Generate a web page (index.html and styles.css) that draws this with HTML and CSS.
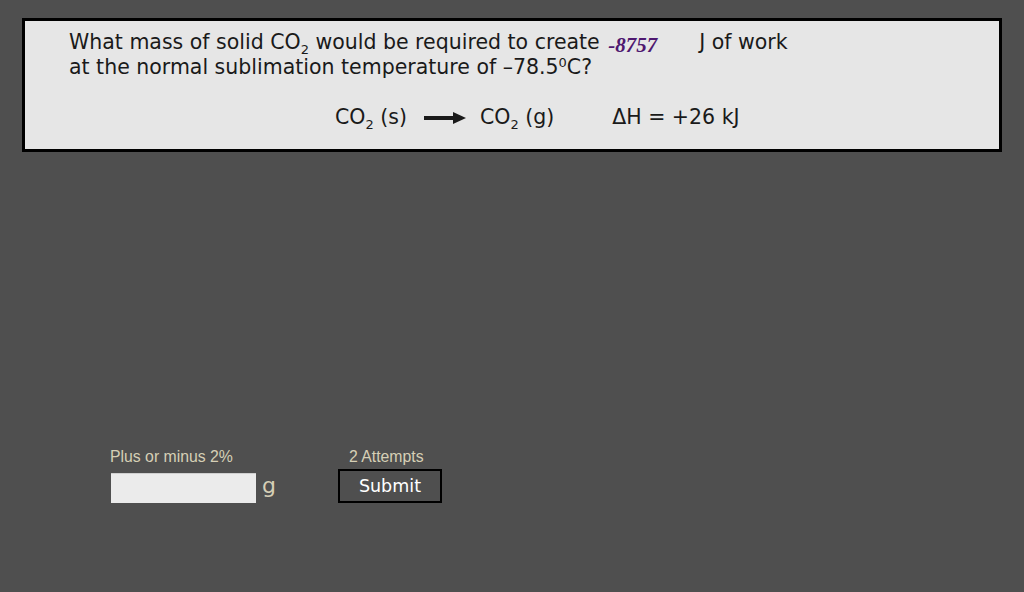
FILE: index.html
```html
<!DOCTYPE html>
<html>
<head>
<meta charset="utf-8">
<link rel="stylesheet" href="styles.css">
</head>
<body>
<div class="question">
  <div class="line">What mass of solid CO<sub>2</sub> would be required to create <span class="num">-8757</span><span class="unit">J of work</span></div>
  <div class="line">at the normal sublimation temperature of &ndash;78.5<sup>0</sup>C?</div>
  <div class="eq">
    <span class="sp">CO<sub>2</sub> (s)</span>
    <svg class="arrow" width="42" height="14" viewBox="0 0 42 14"><rect x="0" y="5" width="30" height="4" fill="#1a1a1a"/><polygon points="29,1 42,7 29,13" fill="#1a1a1a"/></svg>
    <span class="sp">CO<sub>2</sub> (g)</span>
    <span class="dh">&Delta;H = +26 kJ</span>
  </div>
</div>
<div class="answer">
  <div class="col">
    <div class="label">Plus or minus 2%</div>
    <div class="inrow"><div class="input"></div><span class="g">g</span></div>
  </div>
  <div class="col col2">
    <div class="label att">2 Attempts</div>
    <div class="btn">Submit</div>
  </div>
</div>
</body>
</html>
```

FILE: styles.css
```css
html, body { margin: 0; padding: 0; }
body {
  background: #4f4f4f;
  width: 1024px;
  height: 592px;
  overflow: hidden;
  font-family: "DejaVu Sans", Verdana, sans-serif;
}
.question {
  margin: 18px 0 0 22px;
  width: 930px;
  height: 119px;
  border: 3px solid #000;
  background: #e6e6e6;
  color: #1a1a1a;
  font-size: 20.5px;
  padding: 9px 0 0 44px;
}
.line { line-height: 25px; white-space: nowrap; }
sub { font-size: 13px; vertical-align: -5px; line-height: 0; }
sup { font-size: 13px; vertical-align: 7px; line-height: 0; }
.num {
  font-family: "Liberation Serif", serif;
  font-style: italic;
  font-weight: bold;
  color: #4e1870;
  font-size: 21px;
  margin-left: 2px;
  display: inline-block;
  width: 91px;
  position: relative;
  top: 3px;
}
.eq {
  margin-top: 25px;
  margin-left: 266px;
  display: flex;
  align-items: center;
  white-space: nowrap;
  line-height: 25px;
}
.arrow { margin: 0 14px 0 17px; }
.dh { margin-left: 58px; }
.answer {
  display: flex;
  margin: 297px 0 0 110px;
  font-family: "Liberation Sans", Arial, sans-serif;
}
.label { color: #d6cfb6; font-size: 15.8px; line-height: 16px; }
.inrow { display: flex; align-items: center; margin-top: 8px; }
.input {
  width: 145px;
  height: 29px;
  background: #ebebeb;
  border-top: 1px solid #cfcfcf;
  margin-left: 1px;
}
.g { color: #d6cfb6; font-size: 22px; margin-left: 6px; position: relative; top: -3px; font-family: "DejaVu Sans", sans-serif; }
.col2 { margin-left: 62px; display: flex; flex-direction: column; }
.att { margin-left: 11px; }
.btn {
  margin-top: 4px;
  width: 100px;
  height: 30px;
  border: 2px solid #000;
  color: #fff;
  font-family: "DejaVu Sans", sans-serif;
  font-size: 17.5px;
  display: flex;
  align-items: center;
  justify-content: center;
}
```
